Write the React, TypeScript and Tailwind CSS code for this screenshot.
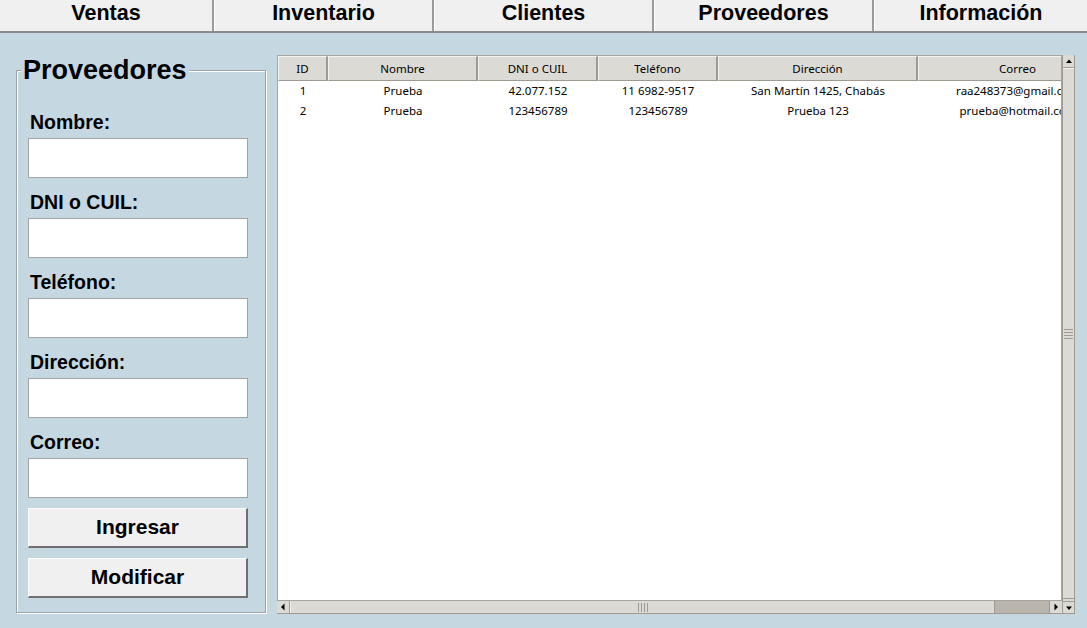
import React from "react";

const tabs = ["Ventas", "Inventario", "Clientes", "Proveedores", "Información"];
const tabWidths = ["w-[214px]", "w-[220px]", "w-[220px]", "w-[220px]", "w-[213px]"];

const fields = ["Nombre:", "DNI o CUIL:", "Teléfono:", "Dirección:", "Correo:"];

const cols = [
  { name: "ID", w: "w-[50px]" },
  { name: "Nombre", w: "w-[150px]" },
  { name: "DNI o CUIL", w: "w-[120px]" },
  { name: "Teléfono", w: "w-[120px]" },
  { name: "Dirección", w: "w-[200px]" },
  { name: "Correo", w: "w-[200px]" },
];

const rows = [
  ["1", "Prueba", "42.077.152", "11 6982-9517", "San Martín 1425, Chabás", "raa248373@gmail.com"],
  ["2", "Prueba", "123456789", "123456789", "Prueba 123", "prueba@hotmail.com"],
];

function Arrow({ dir }: { dir: "up" | "down" | "left" | "right" }) {
  const pts =
    dir === "up"
      ? "1,6 4,2.5 7,6"
      : dir === "down"
      ? "1,2.5 4,6 7,2.5"
      : dir === "left"
      ? "5.5,0.5 2,4 5.5,7.5"
      : "2.5,0.5 6,4 2.5,7.5";
  return (
    <svg width="8" height="8" viewBox="0 0 8 8">
      <polygon points={pts} fill="#000" />
    </svg>
  );
}

export default function App() {
  return (
    <div
      className="w-[1087px] h-[628px] bg-[#c5d8e2] overflow-hidden"
      style={{ fontFamily: '"Liberation Sans", Arial, sans-serif' }}
    >
      {/* top bar */}
      <div className="flex h-[33px] border-b-2 border-[#8a8a8a] bg-[#f0f0f0]">
        {tabs.map((t, i) => (
          <div
            key={t}
            className={`${tabWidths[i]} h-[31px] flex justify-center items-start text-[21.5px] leading-[27px] font-bold text-black ${
              i < tabs.length - 1 ? "border-r-2 border-r-[#9a9a9a]" : ""
            } ${i > 0 ? "border-l border-l-white" : ""}`}
          >
            {t}
          </div>
        ))}
      </div>

      <div className="flex items-start">
        {/* left frame */}
        <div className="relative ml-[16px] mt-[37px] w-[250px] h-[543px] border border-[#9aa4a8] shadow-[inset_1px_1px_0_#ffffff,1px_1px_0_#ffffff] pl-[11px] pt-[41px]">
          <div className="absolute left-[4px] top-[-14px] px-[2px] bg-[#c5d8e2] text-[27px] leading-none font-bold text-black">
            Proveedores
          </div>
          {fields.map((f) => (
            <div key={f} className="mb-[14px]">
              <div className="ml-[2px] h-[20px] text-[19.5px] leading-[20px] font-bold text-black">{f}</div>
              <div className="mt-[6px] w-[220px] h-[40px] bg-white border border-[#a3a3a3]" />
            </div>
          ))}
          <div className="-mt-[4px] flex flex-col gap-[10px]">
            {["Ingresar", "Modificar"].map((b) => (
              <div
                key={b}
                className="w-[220px] h-[40px] bg-[#f0f0f0] border-t border-l border-t-[#fdfdfd] border-l-[#fdfdfd] border-b-2 border-r-2 border-b-[#6f6f6f] border-r-[#6f6f6f] flex items-center justify-center pb-[1px] text-[21px] font-bold text-black"
              >
                {b}
              </div>
            ))}
          </div>
        </div>

        {/* table */}
        <div
          className="ml-[11px] mt-[22px] w-[798px] h-[559px] flex"
          style={{ fontFamily: '"Noto Sans", "Open Sans", sans-serif' }}
        >
          <div className="flex-1 min-w-0 flex flex-col">
            <div className="flex-1 bg-white border border-[#a8a59e] overflow-hidden">
              <div className="flex h-[25px] bg-[#dcdad5] w-max">
                {cols.map((c) => (
                  <div
                    key={c.name}
                    className={`${c.w} shrink-0 h-[25px] flex items-center justify-center pt-[1px] text-[11.5px] text-black border-t border-l border-t-[#f4f3f1] border-l-[#f4f3f1] border-r-2 border-b border-r-[#9e9a91] border-b-[#9e9a91]`}
                  >
                    {c.name}
                  </div>
                ))}
              </div>
              {rows.map((r, ri) => (
                <div key={ri} className="flex h-[20px] w-max">
                  {r.map((v, ci) => (
                    <div
                      key={ci}
                      className={`${cols[ci].w} shrink-0 flex items-center justify-center text-[11.5px] text-black whitespace-nowrap`}
                    >
                      {v}
                    </div>
                  ))}
                </div>
              ))}
            </div>
            {/* horizontal scrollbar */}
            <div className="h-[13px] flex bg-[#b9b5ac] border-b border-[#9e9a91]">
              <div className="w-[13px] h-full bg-[#dcdad5] border-r border-[#9e9a91] flex items-center justify-center">
                <Arrow dir="left" />
              </div>
              <div className="w-[705px] h-full bg-[#dcdad5] border-l border-[#f4f3f1] border-r border-r-[#9e9a91] flex items-center justify-center gap-[2px]">
                <div className="w-px h-[9px] bg-[#9e9a91]" />
                <div className="w-px h-[9px] bg-[#9e9a91]" />
                <div className="w-px h-[9px] bg-[#9e9a91]" />
                <div className="w-px h-[9px] bg-[#9e9a91]" />
              </div>
              <div className="flex-1" />
              <div className="w-[13px] h-full bg-[#dcdad5] border-l border-[#9e9a91] flex items-center justify-center">
                <Arrow dir="right" />
              </div>
            </div>
          </div>
          {/* vertical scrollbar */}
          <div className="w-[13px] h-full flex flex-col bg-[#dcdad5] border-l border-r border-[#9e9a91]">
            <div className="h-[13px] border-b border-[#9e9a91] flex items-center justify-center">
              <Arrow dir="up" />
            </div>
            <div className="flex-1 border-t border-[#f4f3f1] border-b border-b-[#9e9a91] flex flex-col items-center justify-center gap-[2px]">
              <div className="w-[9px] h-px bg-[#9e9a91]" />
              <div className="w-[9px] h-px bg-[#9e9a91]" />
              <div className="w-[9px] h-px bg-[#9e9a91]" />
              <div className="w-[9px] h-px bg-[#9e9a91]" />
            </div>
            <div className="h-[2px] bg-[#dcdad5]" />
            <div className="h-[13px] border-t border-b border-[#9e9a91] flex items-center justify-center">
              <Arrow dir="down" />
            </div>
          </div>
        </div>
      </div>
    </div>
  );
}
